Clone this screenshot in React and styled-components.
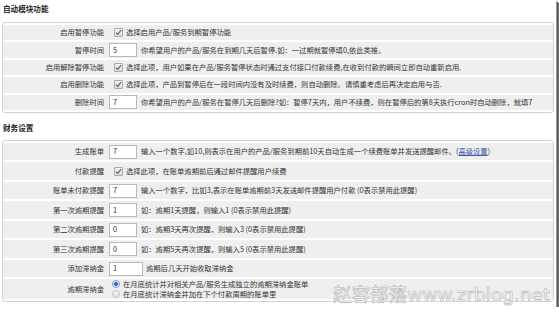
import React from "react";
import styled, { createGlobalStyle } from "styled-components";

const Global = createGlobalStyle`
  html, body {
    margin: 0;
    padding: 0;
    background: #ffffff;
  }
  body {
    font-family: "Noto Sans CJK SC", "Liberation Sans", sans-serif;
    color: #333;
  }
`;

const Frame = styled.div`
  position: relative;
  width: 552px;
  height: 303px;
  padding: 4px 2px 0 2px;
  background: #fff;
  box-shadow: 1px 1px 0 #9a9a9a, 2px 2px 0 #555, 3px 3px 1px #777;
  overflow: hidden;
`;

const Heading = styled.div`
  font-size: 7.6px;
  font-weight: 700;
  line-height: 10px;
  height: 10px;
  padding-left: 1px;
  color: #222;
  margin: ${(p) => p.$margin};
`;

const Table = styled.table`
  width: 100%;
  border: 1px solid #d2d2d2;
  border-radius: 3px;
  border-collapse: separate;
  border-spacing: 0 2px;
  background: #fff;
  font-size: 7.3px;
  line-height: 9px;

  td {
    height: ${(p) => p.$rowH}px;
    padding: 0;
    background: #efefef;
    vertical-align: middle;
    white-space: nowrap;
  }
`;

const Label = styled.td`
  width: 101px;
  text-align: right;
  padding-right: 3px !important;
  color: #333;
`;

const Field = styled.td`
  padding-left: 2px !important;
`;

const Line = styled.div`
  display: flex;
  align-items: center;
  height: ${(p) => p.$h || "auto"};
`;

const Input = styled.div`
  box-sizing: border-box;
  width: ${(p) => p.$w || 28}px;
  height: 14px;
  border: 1px solid #b9b9b9;
  background: #fff;
  padding-left: 3px;
  display: flex;
  align-items: center;
  color: #333;
  flex-shrink: 0;
`;

const Desc = styled.span`
  margin-left: ${(p) => p.$gap || 4}px;
  color: #333;
`;

const Box = styled.span`
  box-sizing: border-box;
  width: 9px;
  height: 9px;
  margin-left: 5px;
  border: 1px solid #a9a9a9;
  border-radius: 1px;
  background: linear-gradient(#f8f8f8, #dcdcdc);
  display: inline-flex;
  align-items: center;
  justify-content: center;
  flex-shrink: 0;
`;

const Radio = styled.span`
  box-sizing: border-box;
  width: 8px;
  height: 8px;
  margin-left: 3px;
  border-radius: 50%;
  border: 1px solid ${(p) => (p.$on ? "#7a9ccc" : "#c4c4c4")};
  background: ${(p) =>
    p.$on
      ? "radial-gradient(circle, #2f6bc9 0 1.6px, #dfe9f7 2.2px)"
      : "linear-gradient(#f6f6f6, #e2e2e2)"};
  flex-shrink: 0;
`;

const Link = styled.span`
  color: #3a5ca8;
  text-decoration: underline;
`;

const Watermark = styled.div`
  position: absolute;
  right: 6px;
  bottom: 0px;
  font-family: "DejaVu Sans", "Noto Sans CJK SC", sans-serif;
  font-size: 18.5px;
  font-weight: 400;
  line-height: 24px;
  color: #fff;
  -webkit-text-stroke: 0.6px #b4b4b4;
  text-shadow: 1px 1px 0 #e4e4e4;
  letter-spacing: 0;
  pointer-events: none;
`;

function Check() {
  return (
    <Box>
      <svg width="7" height="7" viewBox="0 0 7 7">
        <path d="M1 3.6 L2.8 5.4 L6 1.2" fill="none" stroke="#5a6a5a" strokeWidth="1.2" />
      </svg>
    </Box>
  );
}

function Row({ label, children }) {
  return (
    <tr>
      <Label>{label}</Label>
      <Field>{children}</Field>
    </tr>
  );
}

function NumRow({ label, value, w, children }) {
  return (
    <Row label={label}>
      <Line>
        <Input $w={w}>{value}</Input>
        <Desc $gap={w ? 3 : 4}>{children}</Desc>
      </Line>
    </Row>
  );
}

function CheckRow({ label, children }) {
  return (
    <Row label={label}>
      <Line>
        <Check />
        <Desc $gap={3}>{children}</Desc>
      </Line>
    </Row>
  );
}

export default function App() {
  return (
    <>
      <Global />
      <Frame>
        <Heading $margin="0 0 8px 0">自动模块功能</Heading>
        <Table $rowH={15.4}>
          <tbody>
            <CheckRow label="启用暂停功能">选择启用产品/服务到期暂停功能</CheckRow>
            <NumRow label="暂停时间" value="5">
              你希望用户的产品/服务在到期几天后暂停.如：一过期就暂停填0,依此类推。
            </NumRow>
            <CheckRow label="启用解除暂停功能">
              选择此项，用户如果在产品/服务暂停状态时通过支付接口付款续费,在收到付款的瞬间立即自动重新启用.
            </CheckRow>
            <CheckRow label="启用删除功能">
              选择此项，产品到暂停后在一段时间内没有及时续费，则自动删除。请慎重考虑后再决定启用与否.
            </CheckRow>
            <NumRow label="删除时间" value="7">
              你希望用户的产品/服务在暂停几天后删除?如：暂停7天内，用户不续费，则在暂停后的第8天执行cron时自动删除，就填7
            </NumRow>
          </tbody>
        </Table>

        <Heading $margin="10px 0 7px 0">财务设置</Heading>
        <Table $rowH={17.5}>
          <tbody>
            <NumRow label="生成账单" value="7">
              输入一个数字,如10,则表示在用户的产品/服务到期前10天自动生成一个续费账单并发送提醒邮件。(<Link>高级设置</Link>)
            </NumRow>
            <CheckRow label="付款提醒">选择此项，在账单逾期前后通过邮件提醒用户续费</CheckRow>
            <NumRow label="账单未付款提醒" value="7">
              输入一个数字，比如3,表示在账单逾期前3天发送邮件提醒用户付款 (0表示禁用此提醒)
            </NumRow>
            <NumRow label="第一次逾期提醒" value="1">
              如：逾期1天提醒，则输入1 (0表示禁用此提醒)
            </NumRow>
            <NumRow label="第二次逾期提醒" value="0">
              如：逾期3天再次提醒，则输入3 (0表示禁用此提醒)
            </NumRow>
            <NumRow label="第三次逾期提醒" value="0">
              如：逾期5天再次提醒，则输入5 (0表示禁用此提醒)
            </NumRow>
            <NumRow label="添加滞纳金" value="1" w={34}>
              逾期后几天开始收取滞纳金
            </NumRow>
            <Row label="逾期滞纳金">
              <Line $h="10px">
                <Radio $on />
                <Desc $gap={3}>在月底统计并对相关产品/服务生成独立的逾期滞纳金账单</Desc>
              </Line>
              <Line $h="10px">
                <Radio />
                <Desc $gap={3}>在月底统计滞纳金并加在下个付款周期的账单里</Desc>
              </Line>
            </Row>
          </tbody>
        </Table>
        <Watermark>赵容部落www.zrblog.net</Watermark>
      </Frame>
    </>
  );
}
